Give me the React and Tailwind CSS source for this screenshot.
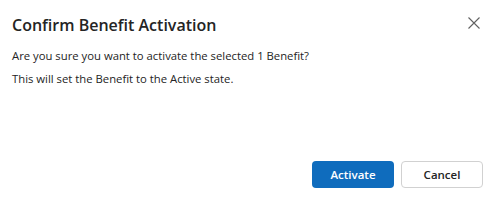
import React from 'react';

const App = () => {
  return (
    <div
      className="w-[500px] h-[200px] bg-white text-[#242424] flex flex-col"
      style={{ fontFamily: '"Open Sans", "Noto Sans", sans-serif' }}
    >
      <div className="flex items-start justify-between pl-3 pr-[16px] pt-[14px]">
        <h2 className="text-[16px] leading-[22px] font-semibold">Confirm Benefit Activation</h2>
        <button className="w-[20px] h-[20px] -mt-[1px] flex items-center justify-center text-[#616161]">
          <svg width="12" height="12" viewBox="0 0 12 12" fill="none" stroke="currentColor" strokeWidth="1.1">
            <path d="M0.5 0.5 L11.5 11.5 M11.5 0.5 L0.5 11.5" />
          </svg>
        </button>
      </div>
      <div className="pl-3 pt-[12px] text-[11.3px] leading-[16px]">
        <p>Are you sure you want to activate the selected 1 Benefit?</p>
        <p className="mt-[7px]">This will set the Benefit to the Active state.</p>
      </div>
      <div className="flex-1" />
      <div className="flex justify-end gap-[7px] pr-[17px] pb-[12px]">
        <button className="w-[82px] h-[27px] rounded-[4px] bg-[#0f6cbd] text-white text-[11.5px] font-semibold">
          Activate
        </button>
        <button className="w-[82px] h-[27px] rounded-[4px] bg-white border border-[#d1d1d1] text-[#242424] text-[11.5px] font-semibold">
          Cancel
        </button>
      </div>
    </div>
  );
};

export default App;
